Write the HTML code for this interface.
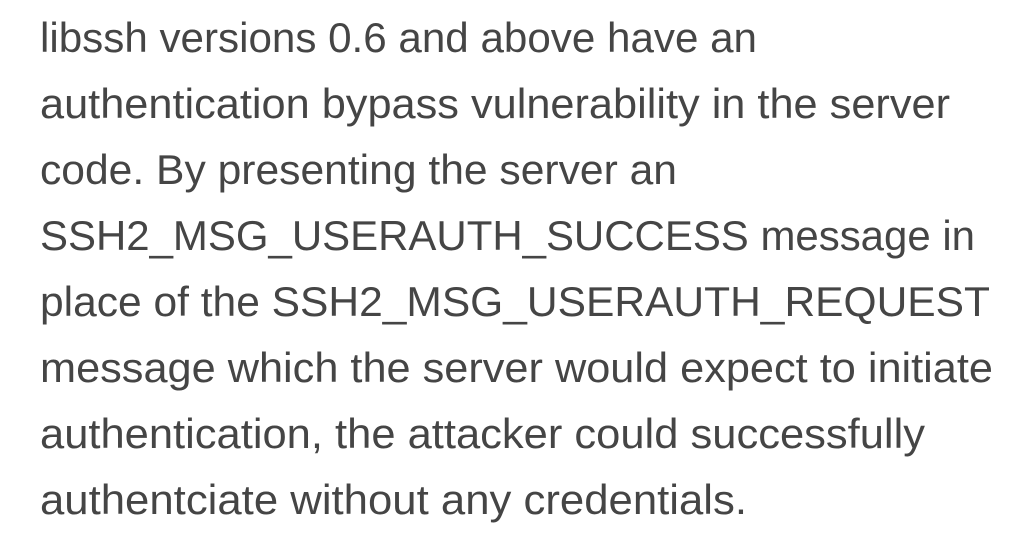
<!DOCTYPE html>
<html><head><meta charset="utf-8"><style>
html,body{margin:0;padding:0;background:#fff;}
svg{display:block}
text{font-family:"Liberation Sans",sans-serif;font-size:42px;fill:#454545;}
</style></head><body>
<svg width="1009" height="537" viewBox="0 0 1009 537">
<text x="40" y="52" textLength="717" lengthAdjust="spacingAndGlyphs">libssh versions 0.6 and above have an</text>
<text x="40" y="118" textLength="910" lengthAdjust="spacingAndGlyphs">authentication bypass vulnerability in the server</text>
<text x="40" y="184" textLength="637" lengthAdjust="spacingAndGlyphs">code. By presenting the server an</text>
<text x="40" y="250" textLength="935" lengthAdjust="spacingAndGlyphs">SSH2_MSG_USERAUTH_SUCCESS message in</text>
<text x="40" y="316" textLength="950" lengthAdjust="spacingAndGlyphs">place of the SSH2_MSG_USERAUTH_REQUEST</text>
<text x="40" y="382" textLength="953" lengthAdjust="spacingAndGlyphs">message which the server would expect to initiate</text>
<text x="40" y="448" textLength="885" lengthAdjust="spacingAndGlyphs">authentication, the attacker could successfully</text>
<text x="40" y="514" textLength="707" lengthAdjust="spacingAndGlyphs">authentciate without any credentials.</text>
</svg>
</body></html>
